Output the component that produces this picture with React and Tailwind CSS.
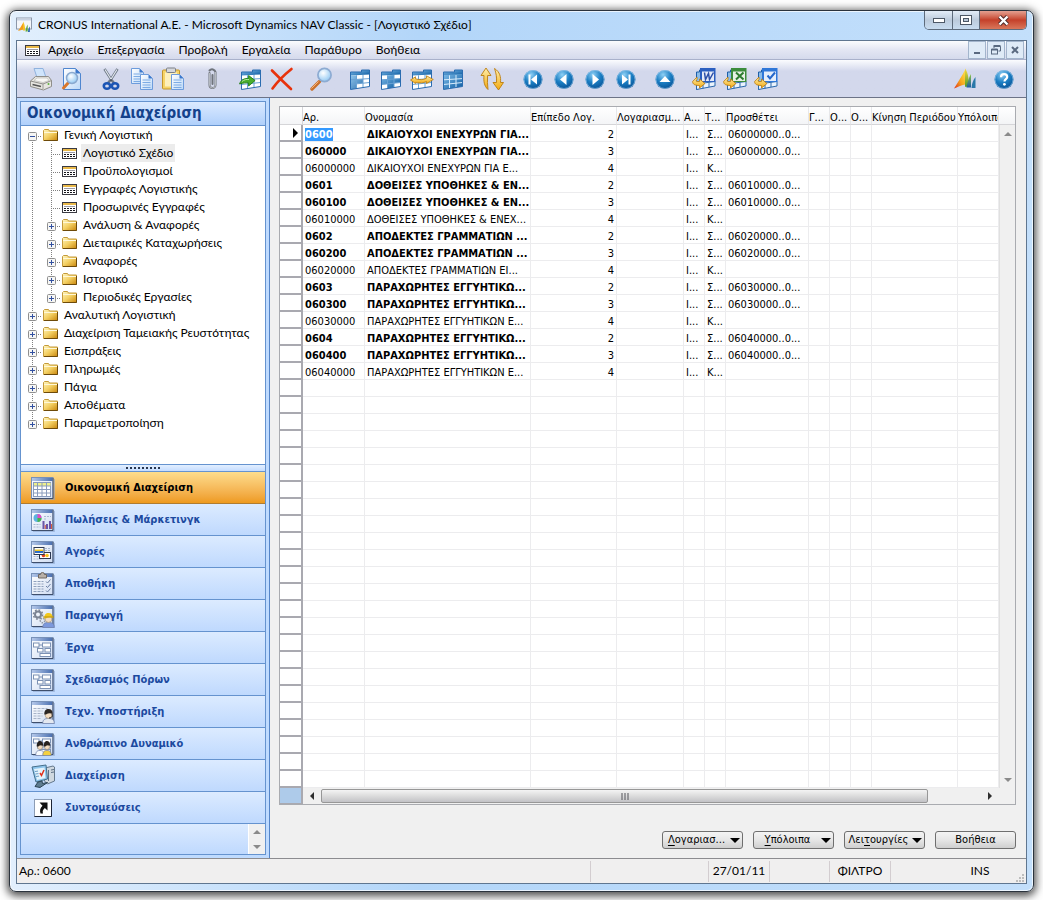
import React from 'react';

const UI = "font-['Lato','Open_Sans',sans-serif]";
const GRID = "font-['DejaVu_Sans_Condensed','DejaVu_Sans',sans-serif]";

/* ---------- shared gradients for the drawings ---------- */
function Defs() {
  return (
    <svg className="absolute h-0 w-0" aria-hidden="true">
      <defs>
        <linearGradient id="gFolder" x1="0" y1="0" x2="1" y2="1">
          <stop offset="0" stopColor="#fff6c0" />
          <stop offset=".5" stopColor="#f3cf62" />
          <stop offset="1" stopColor="#c9860c" />
        </linearGradient>
        <linearGradient id="gBlue" x1="0" y1="0" x2="1" y2="1">
          <stop offset="0" stopColor="#7dbbe8" />
          <stop offset="1" stopColor="#0b5aa0" />
        </linearGradient>
        <radialGradient id="gOrb" cx=".4" cy=".25" r=".8">
          <stop offset="0" stopColor="#8fd0f5" />
          <stop offset=".5" stopColor="#1c7fc4" />
          <stop offset="1" stopColor="#064e92" />
        </radialGradient>
        <radialGradient id="gLens" cx=".4" cy=".35" r=".7">
          <stop offset="0" stopColor="#ffffff" />
          <stop offset="1" stopColor="#8cc6f2" />
        </radialGradient>
        <linearGradient id="gGold" x1="0" y1="0" x2="0" y2="1">
          <stop offset="0" stopColor="#fff0b0" />
          <stop offset="1" stopColor="#f2a80c" />
        </linearGradient>
        <linearGradient id="gPage" x1="0" y1="0" x2="1" y2="1">
          <stop offset="0" stopColor="#ffffff" />
          <stop offset="1" stopColor="#bcd9f8" />
        </linearGradient>
        <linearGradient id="gWin" x1="0" y1="0" x2="1" y2="1">
          <stop offset="0" stopColor="#ffffff" />
          <stop offset="1" stopColor="#cfdcf2" />
        </linearGradient>
        <linearGradient id="gBar" x1="0" y1="0" x2="1" y2="0">
          <stop offset="0" stopColor="#b4c8ea" />
          <stop offset="1" stopColor="#4b70b0" />
        </linearGradient>
        <linearGradient id="gDynA" x1="0" y1="1" x2="1" y2="0">
          <stop offset="0" stopColor="#e0301e" />
          <stop offset=".5" stopColor="#f6a81c" />
          <stop offset="1" stopColor="#ffe24a" />
        </linearGradient>
        <linearGradient id="gDynB" x1="0" y1="0" x2="0" y2="1">
          <stop offset="0" stopColor="#ffd83c" />
          <stop offset="1" stopColor="#4c9c2c" />
        </linearGradient>
        <linearGradient id="gDynC" x1="0" y1="0" x2="0" y2="1">
          <stop offset="0" stopColor="#8cc63c" />
          <stop offset="1" stopColor="#1c5ca8" />
        </linearGradient>
      </defs>
    </svg>
  );
}

function Svg({ children, size = 24 }) {
  return (
    <svg width={size} height={size} viewBox={`0 0 ${size} ${size}`} fill="none" aria-hidden="true" className="shrink-0">
      {children}
    </svg>
  );
}

/* ---------- toolbar drawings ---------- */
const Printer = () => (
  <Svg>
    <path d="M5 1.5h9l3 9H8z" fill="#cfe4fb" stroke="#8fb2de" />
    <path d="M1.5 14l5-4.5h13l3 4v6l-8 3.5-13-3.5z" fill="#e6e5e0" stroke="#8f8e8a" />
    <path d="M1.5 14l12.500 3 8.500-3.500" stroke="#8f8e8a" />
    <path d="M14 17v5" stroke="#9d9c98" />
    <path d="M3.500 17.500l8.500 2" stroke="#555" strokeWidth="1.500" />
    <path d="M8 11h10l2 2.500-6 2-9-2z" fill="#f8f8f5" stroke="#b5b4b0" strokeWidth=".6" />
    <circle cx="19.500" cy="17" r="1" fill="#5fb43c" />
  </Svg>
);
const Preview = () => (
  <Svg>
    <path d="M3.500 1.500h12l5 5v16h-17z" fill="url(#gPage)" stroke="#4f86cf" />
    <path d="M15.500 1.500l5 5h-5z" fill="#3c78cc" />
    <path d="M8.500 15.500L3.500 21" stroke="#d9772b" strokeWidth="3" strokeLinecap="round" />
    <circle cx="12" cy="11" r="5.500" fill="url(#gLens)" stroke="#8aa9cf" strokeWidth="1.500" />
  </Svg>
);
const Cut = () => (
  <Svg>
    <path d="M5.500 2l7 11 2.500 3M18.500 2l-7 11L9 16" stroke="#6d7886" strokeWidth="2.600" />
    <path d="M6 2.500l6.500 10.500M18 2.500L11.500 13" stroke="#e4e9ef" strokeWidth="1.100" />
    <ellipse cx="8" cy="19" rx="3.200" ry="2.800" stroke="#1b55b4" strokeWidth="2.600" />
    <ellipse cx="16" cy="19" rx="3.200" ry="2.800" stroke="#1b55b4" strokeWidth="2.600" />
    <circle cx="12" cy="13" r="1" fill="#3f4a58" />
  </Svg>
);
function Sheet({ x, y }) {
  return (
    <g>
      <path d={`M${x} ${y}h8l4 4v11h-12z`} fill="url(#gPage)" stroke="#6d9cdc" />
      <path d={`M${x + 8} ${y}l4 4h-4z`} fill="#3c78cc" />
      <path d={`M${x + 2} ${y + 5.5}h8M${x + 2} ${y + 8}h8M${x + 2} ${y + 10.5}h8M${x + 2} ${y + 13}h8`} stroke="#7cabe4" />
    </g>
  );
}
const Copy = () => (
  <Svg>
    <Sheet x={1.5} y={1.5} />
    <Sheet x={10.5} y={7.5} />
  </Svg>
);
const Paste = () => (
  <Svg>
    <rect x="1.500" y="3" width="17" height="19" rx="1" fill="#f6d468" stroke="#c3962c" />
    <rect x="4" y="5.500" width="12" height="14" fill="#fdf0bc" />
    <rect x="5.500" y="1" width="9" height="4.500" rx="1" fill="#d6d8dc" stroke="#7d8086" />
    <Sheet x={10.5} y={7.5} />
  </Svg>
);
const Clip = () => (
  <Svg>
    <path d="M9.500 6v12a3 3 0 006 0V5a3.500 3.500 0 00-6-1.500M12.500 8v9" stroke="#6f747c" strokeWidth="2" strokeLinecap="round" />
    <path d="M9.500 6v12a3 3 0 006 0V5" stroke="#c6cad0" strokeWidth=".8" />
  </Svg>
);
const SHEET_OUTLINE = 'M2.500 5h11V3H21.500v16.500l-19 3z';
function Grid({ fills, light }) {
  return (
    <g>
      <path d={SHEET_OUTLINE} fill="#ffffff" />
      <path d="M2.500 5h11V3h8v4.500l-19 1z" fill="url(#gBlue)" />
      {fills}
      <path d="M2.500 12.800l19-1.200M2.500 17.500l19-2M8.500 8.300v13.200M15 8v12.500" stroke={light ? '#d8ecfc' : '#6aa2d4'} />
      <path d={SHEET_OUTLINE} stroke="#2a6cb0" />
    </g>
  );
}
const TableCol = () => <Svg><Grid fills={<path d="M2.500 8.500h6v13l-6 1zM8.500 12.600l6.500-.5v4l-6.500.7z" fill="url(#gBlue)" opacity=".85" />} /></Svg>;
const TableRow = () => <Svg><Grid fills={<path d="M2.500 12.800l19-1.200v4l-19 2zM8.500 8.300L15 8v12.500l-6.500 1z" fill="url(#gBlue)" />} /></Svg>;
const TableFull = () => <Svg><Grid light fills={<path d="M2.500 8l19-1v12.500l-19 3z" fill="url(#gBlue)" />} /></Svg>;
const TableArrow = () => (
  <Svg>
    <Grid />
    <path d="M.5 13l5-3.200v2c5 1.400 8 1 11-.6V8.800l6.800 3.700-6.800 4v-2c-3 1.500-7 1.800-11 1v1z" fill="url(#gGold)" stroke="#b97a0c" strokeWidth=".8" />
  </Svg>
);
const TableInsert = () => (
  <Svg>
    <Grid />
    <path d="M.6 17c1-4 5-6 9-5.500V8.500l6.500 5-6.500 5.500v-3c-3-.5-5 0-9 1z" fill="#49ae2c" stroke="#1d7a12" strokeWidth=".9" />
    <path d="M3 14.500c2-1.800 4.500-2.300 7-2" stroke="#b8ec9c" />
  </Svg>
);
const Cross = () => (
  <Svg>
    <path d="M2 3.500c5 5 11 11 19 18.500M21.500 2C14 8 8 14 2.500 21.500" stroke="#e8320c" strokeWidth="2.600" strokeLinecap="round" />
  </Svg>
);
const Find = () => (
  <Svg>
    <path d="M10.500 14.500L3 22" stroke="#c9702c" strokeWidth="3.400" strokeLinecap="round" />
    <path d="M9.500 14.500L2.500 21.500" stroke="#f6b47c" strokeWidth="1" />
    <circle cx="15.500" cy="8" r="6.600" fill="url(#gLens)" stroke="#8dabd2" strokeWidth="1.700" />
  </Svg>
);
const Refresh = () => (
  <Svg>
    <path d="M6 1L1 8.500h3C3.500 14 4 19 8 22.500c-.6-5-.7-9-.4-14H11z" fill="url(#gGold)" stroke="#bb7d0c" strokeWidth=".9" />
    <path d="M18.500 23l5-7.500h-3C21 10 20 5 14.500 1.500c1.800 5 2.300 9 2 14H13z" fill="url(#gGold)" stroke="#bb7d0c" strokeWidth=".9" />
  </Svg>
);
function Orb({ children }) {
  return (
    <Svg>
      <circle cx="12" cy="12.500" r="9.500" fill="url(#gOrb)" />
      <circle cx="12" cy="12.500" r="9" stroke="#9cc8ea" strokeWidth=".8" opacity=".8" />
      {children}
    </Svg>
  );
}
const First = () => <Orb><path d="M7.500 7.500h2v10h-2zM16 7.500v10l-6-5z" fill="#fff" /></Orb>;
const Prev = () => <Orb><path d="M14.500 7v11L8 12.500z" fill="#fff" /></Orb>;
const Next = () => <Orb><path d="M9.500 7v11l6.500-5.500z" fill="#fff" /></Orb>;
const Last = () => <Orb><path d="M14.500 7.500h2v10h-2zM8 7.500v10l6-5z" fill="#fff" /></Orb>;
const Up = () => <Orb><path d="M6.500 15h11L12 9z" fill="#fff" /></Orb>;
const Help = () => (
  <Orb>
    <path d="M9 10.200c0-2 1.300-3 3.100-3 1.900 0 3.100 1.100 3.100 2.700 0 2.100-2.700 2.300-2.700 4.500" stroke="#fff" strokeWidth="2.200" />
    <circle cx="12.400" cy="17.300" r="1.400" fill="#fff" />
  </Orb>
);
function Export({ color, children }) {
  return (
    <Svg>
      <path d="M4.500 5h3V3h4v16.500l-7 3z" fill="#8cbce8" stroke="#1d5fa8" />
      <path d="M4.500 17L23 14.500v4.500L4.500 22.500z" fill="#eaf3fc" stroke="#2a68ac" />
      <path d="M11 16v5.500M17 15.500V20" stroke="#2a68ac" />
      <rect x="8.500" y="1.500" width="14.500" height="13" fill={color} stroke={color} />
      <rect x="10" y="4.500" width="12" height="9.500" fill="#fff" opacity=".88" />
      {children}
      <path d="M.6 14.500L5 10v2.500c-1 1-1 1.800 0 2h2.500V12l5.500 4.500-5.500 4.500v-2.500C3.500 18.500.6 17.500.6 14.500z" fill="url(#gGold)" stroke="#b9780a" strokeWidth=".8" />
    </Svg>
  );
}
const Word = () => <Export color="#2b5fc0"><path d="M12.500 5.500l1 7 3-6 1 6 4-7" stroke="#2b4fa8" strokeWidth="1.500" /></Export>;
const Excel = () => <Export color="#3c8c3c"><path d="M13 5.500l7.500 7M20.500 5.500l-7.500 7" stroke="#2c7c30" strokeWidth="2" /></Export>;
const Check = () => <Export color="#2f77d8"><path d="M13.500 8.500l2.500 3 5-6" stroke="#2467cc" strokeWidth="2" /></Export>;
const Dynamics = () => (
  <Svg>
    <path d="M1 21.500C5 15 9 9 12 3v14.500C8 18.500 4.500 20 1 21.500z" fill="url(#gDynA)" />
    <path d="M12 1.500c2.500 3 3.800 8 4 18.200h-4z" fill="url(#gDynB)" />
    <path d="M13.500 20.500c.8-5 2.200-9.500 4.500-13.500v13.500z" fill="url(#gDynC)" />
    <path d="M18.500 21c.3-4.500 1.700-8 4-11v11z" fill="#2a78a8" />
  </Svg>
);

/* ---------- small drawings ---------- */
const AppLogo = () => (
  <Svg size={16}>
    <rect x=".5" y="1" width="15" height="11" fill="#f4f6fa" stroke="#8d98aa" />
    <path d="M1 1.500h14v2H1z" fill="#c8d2e2" />
    <path d="M2 14c2-3 3.500-5 5-8v6.500z" fill="#f39c1c" />
    <path d="M7 4.500c1.500 2 2 5 2.200 9H7z" fill="#f6c324" />
    <path d="M9.500 14.500c.3-3 1-5 2.200-7v7z" fill="#5fa83c" />
    <path d="M12 15c.2-3 .8-4 1.800-5.500V15z" fill="#1f5fae" />
  </Svg>
);
const FormIcon = () => (
  <svg width="15" height="11" viewBox="0 0 15 11" aria-hidden="true" className="shrink-0">
    <rect x=".5" y=".5" width="14" height="10" fill="#fff" stroke="#3a3a42" />
    <path d="M1 1h13v2H1z" fill="#e9b94a" />
    <path d="M2 4.500h11" stroke="#9a9aa4" />
    <path d="M2 6.500h2M5 6.500h2M8 6.500h2M11 6.500h2M2 8.500h2M5 8.500h2M8 8.500h2M11 8.500h2" stroke="#16161c" />
  </svg>
);
const Folder = () => (
  <svg width="15" height="12" viewBox="0 0 15 12" aria-hidden="true" className="shrink-0">
    <path d="M.5 11.500v-10l1-1h4l1 1.500h8v9.500z" fill="url(#gFolder)" stroke="#c49a3a" />
    <path d="M1 3.500h13" stroke="#fff8d8" />
    <path d="M14.500 3v8.500H1" stroke="#6d4a0a" fill="none" />
  </svg>
);

function WinFrame({ children }) {
  return (
    <Svg>
      <path d="M2 23.500h21.500V3" stroke="#8ba3cc" opacity=".6" />
      <rect x=".5" y="1.500" width="21.500" height="21" fill="url(#gWin)" stroke="#7891b8" />
      <path d="M1 2h20.500v3H1z" fill="url(#gBar)" />
      <path d="M22 2v20.500H1" stroke="#3f4f6c" />
      {children}
    </Svg>
  );
}
const Person = ({ hair, body, x = 17.5, r = 3.4 }) => (
  <g>
    <path d={`M${x - r * 1.7} 23.500c0-4 ${r * 0.6}-5 ${r * 1.7}-5s${r * 1.7} 1 ${r * 1.7} 5z`} fill={body} stroke="#6b7da8" strokeWidth=".7" />
    <circle cx={x} cy="15" r={r} fill="#f4dcc0" stroke="#8a7a60" strokeWidth=".5" />
    <path d={`M${x - r - 0.8} 14.500c0-4 1.500-5.500 ${r + 0.8}-5.500s${r + 0.8} 1.500 ${r + 0.8} 5c-2-1-${r * 1.3}-1-${r * 2} .5z`} fill={hair} />
  </g>
);
const Flow = () => (
  <g stroke="#7d92b4" fill="#fff">
    <path d="M7 9h4M7 9v6h4M16 12v2" fill="none" />
    <rect x="2.500" y="7" width="5.500" height="4" />
    <rect x="11.500" y="7" width="8" height="4" />
    <rect x="6.500" y="12.500" width="5.500" height="3.500" />
    <rect x="14" y="12.500" width="5.500" height="3.500" />
    <rect x="9" y="17.500" width="10.500" height="3" />
  </g>
);
const NavFinance = () => (
  <WinFrame>
    <rect x="2.500" y="6.500" width="17" height="14" fill="#fff" stroke="#8a9cbc" />
    <path d="M3 7h16.500v3H3z" fill="#eef08c" />
    <path d="M2.500 10h17M2.500 13.500h17M2.500 17h17M6.500 6.500v14M11 6.500v14M15.500 6.500v14" stroke="#8a9cbc" />
  </WinFrame>
);
const NavSales = () => (
  <WinFrame>
    <circle cx="6.500" cy="10" r="4" fill="#5bb4e0" />
    <path d="M6.500 10V6a4 4 0 014 4z" fill="#e04cc0" />
    <path d="M6.500 10h4a4 4 0 01-4 4z" fill="#48b44c" />
    <path d="M13 8.500h7M13 11h3M2.500 16.500h7M2.500 19h7" stroke="#a8b8d0" strokeDasharray="2 1" />
    <path d="M12.500 21v-8M16 21v-5M19 21v-8" stroke="#6a56a8" strokeWidth="2" />
    <path d="M14.300 21v-4M20.500 21v-5" stroke="#d85a3c" />
  </WinFrame>
);
const NavPurchases = () => (
  <WinFrame>
    <path d="M14 8.500h6M14 10.500h6M2.500 16.500h7M2.500 19h10" stroke="#a8b8d0" strokeDasharray="2 1" />
    <rect x="8.500" y="12.500" width="11" height="6" fill="#fff" stroke="#2c3850" />
    <circle cx="12.500" cy="15.500" r="1.800" fill="#e0401c" />
    <circle cx="16" cy="15.500" r="1.800" fill="#f4c420" />
    <rect x="3" y="7.500" width="10" height="7" fill="#fff" stroke="#2c3850" />
    <path d="M4 9.500h8v1.500H4z" fill="#f4c81c" />
    <path d="M4 11h8v2H4z" fill="#2c6cc8" />
  </WinFrame>
);
const NavWarehouse = () => (
  <WinFrame>
    <path d="M7.500 6V2.500h2a2 2 0 014 0h2V6z" fill="#b8b0a8" stroke="#706860" />
    <path d="M2.500 9.500h10M2.500 12h10M2.500 14.500h10M2.500 17h10M2.500 19.500h10" stroke="#8fa0bc" strokeDasharray="3 1" />
    <path d="M15 9.500l1.500 1.500 3-3.500M15 14l1.500 1.500 3-3.500M15 18.500l1.500 1.500 3-3.500" stroke="#6c80a4" />
  </WinFrame>
);
const NavProduction = () => (
  <WinFrame>
    <circle cx="7" cy="10.500" r="3" stroke="#7c8494" strokeWidth="2" />
    <circle cx="7" cy="10.500" r="4.600" stroke="#7c8494" strokeWidth="1.500" strokeDasharray="1.800 1.800" />
    <circle cx="11.500" cy="16.500" r="2.200" stroke="#9098a4" strokeWidth="1.500" strokeDasharray="1.500 1" />
    <Person hair="#f2c81c" body="#7c98dc" />
    <path d="M12 13h11" stroke="#b8900c" />
  </WinFrame>
);
const NavJobs = () => <WinFrame><Flow /></WinFrame>;
const NavService = () => (
  <WinFrame>
    <path d="M2.500 8.500h14M2.500 11h9M2.500 13.500h9M2.500 16h9M2.500 18.500h8" stroke="#a8b4c8" strokeDasharray="3 1" />
    <Person hair="#2c2622" body="#e4e8f0" />
    <path d="M21 14c1 2 0 4-3 4" stroke="#2c2622" />
  </WinFrame>
);
const NavHr = () => (
  <WinFrame>
    <Flow />
    <Person hair="#28221e" body="#f8fafc" x={9} r={2.5} />
    <Person hair="#28221e" body="#f4d040" x={16} r={2.5} />
  </WinFrame>
);
const NavAdmin = () => (
  <Svg>
    <path d="M14 4l8-2 1.500 1v14l-7 3-3-3z" fill="#cfd8e0" stroke="#64788c" />
    <path d="M17.500 6v11M20 6l3-.5M20 8.500l3-.5" stroke="#5c7086" />
    <path d="M1 3l14-2 1.500 14L5 18z" fill="#8cc4ec" stroke="#46708c" />
    <path d="M3 5l10.500-1.500L14.500 14 6 16z" fill="#e4f3fc" />
    <path d="M9 9l1.500 2.500L13 6" stroke="#e0301c" strokeWidth="1.500" />
    <path d="M4 7.500l3-.4M4.500 10l3-.4M5 12.500l3-.4" stroke="#6c9cc4" />
    <path d="M7 18l4-1 .5 2.500 5-1L9 23.500l-5-1z" fill="#5e7c90" stroke="#2c4454" />
  </Svg>
);
const NavShortcut = () => (
  <Svg>
    <rect x="3.500" y="3.500" width="17" height="17" fill="#fff" stroke="#8c9cb4" />
    <path d="M20.500 3.500v17h-17" stroke="#1c2434" />
    <path d="M8.500 6.500h8v8l-2.600-2.600c-2 1.500-2.600 3-1.900 5.600h-2.500c-1-3-.3-5.500 2-7.700z" fill="#111" />
  </Svg>
);

/* ---------- data ---------- */
const MENU = ['Αρχείο', 'Επεξεργασία', 'Προβολή', 'Εργαλεία', 'Παράθυρο', 'Βοήθεια'];

const TOOLS = [
  [['Εκτύπωση', Printer], ['Προεπισκόπηση', Preview]],
  [['Αποκοπή', Cut], ['Αντιγραφή', Copy], ['Επικόλληση', Paste]],
  [['Σύνδεσμος', Clip]],
  [['Εισαγωγή', TableInsert], ['Διαγραφή', Cross]],
  [['Εύρεση', Find]],
  [['Φίλτρο πεδίου', TableCol], ['Φίλτρο πίνακα', TableRow], ['Φίλτρο ροής', TableArrow], ['Εμφάνιση όλων', TableFull]],
  [['Ανανέωση', Refresh]],
  [['Πρώτο', First], ['Προηγούμενο', Prev], ['Επόμενο', Next], ['Τελευταίο', Last]],
  [['Λίστα', Up]],
  [['Word', Word], ['Excel', Excel], ['Εργασία', Check]],
];

const TREE = [
  { label: 'Γενική Λογιστική', open: true },
  { label: 'Λογιστικό Σχέδιο', depth: 1, leaf: true, selected: true },
  { label: 'Προϋπολογισμοί', depth: 1, leaf: true },
  { label: 'Εγγραφές Λογιστικής', depth: 1, leaf: true },
  { label: 'Προσωρινές Εγγραφές', depth: 1, leaf: true },
  { label: 'Ανάλυση & Αναφορές', depth: 1 },
  { label: 'Διεταιρικές Καταχωρήσεις', depth: 1 },
  { label: 'Αναφορές', depth: 1 },
  { label: 'Ιστορικό', depth: 1 },
  { label: 'Περιοδικές Εργασίες', depth: 1, last: true },
  { label: 'Αναλυτική Λογιστική' },
  { label: 'Διαχείριση Ταμειακής Ρευστότητας' },
  { label: 'Εισπράξεις' },
  { label: 'Πληρωμές' },
  { label: 'Πάγια' },
  { label: 'Αποθέματα' },
  { label: 'Παραμετροποίηση', last: true },
];

const NAV = [
  ['Οικονομική Διαχείριση', NavFinance],
  ['Πωλήσεις & Μάρκετινγκ', NavSales],
  ['Αγορές', NavPurchases],
  ['Αποθήκη', NavWarehouse],
  ['Παραγωγή', NavProduction],
  ['Έργα', NavJobs],
  ['Σχεδιασμός Πόρων', NavJobs],
  ['Τεχν. Υποστήριξη', NavService],
  ['Ανθρώπινο Δυναμικό', NavHr],
  ['Διαχείριση', NavAdmin],
  ['Συντομεύσεις', NavShortcut],
];

const HEADERS = ['Αρ.', 'Ονομασία', 'Επίπεδο Λογ.', 'Λογαριασμ...', 'Α...', 'Τ...', 'Προσθέτει', 'Γ...', 'Ο...', 'Ο...', 'Κίνηση Περιόδου', 'Υπόλοιπο'];

const ROWS = [
  ['0600', 'ΔΙΚΑΙΟΥΧΟΙ ΕΝΕΧΥΡΩΝ ΓΙΑ...', 2, '06000000..0...'],
  ['060000', 'ΔΙΚΑΙΟΥΧΟΙ ΕΝΕΧΥΡΩΝ ΓΙΑ...', 3, '06000000..0...'],
  ['06000000', 'ΔΙΚΑΙΟΥΧΟΙ ΕΝΕΧΥΡΩΝ ΓΙΑ Ε...', 4, ''],
  ['0601', 'ΔΟΘΕΙΣΕΣ ΥΠΟΘΗΚΕΣ & ΕΝ...', 2, '06010000..0...'],
  ['060100', 'ΔΟΘΕΙΣΕΣ ΥΠΟΘΗΚΕΣ & ΕΝ...', 3, '06010000..0...'],
  ['06010000', 'ΔΟΘΕΙΣΕΣ ΥΠΟΘΗΚΕΣ & ΕΝΕΧ...', 4, ''],
  ['0602', 'ΑΠΟΔΕΚΤΕΣ ΓΡΑΜΜΑΤΙΩΝ ...', 2, '06020000..0...'],
  ['060200', 'ΑΠΟΔΕΚΤΕΣ ΓΡΑΜΜΑΤΙΩΝ ...', 3, '06020000..0...'],
  ['06020000', 'ΑΠΟΔΕΚΤΕΣ ΓΡΑΜΜΑΤΙΩΝ ΕΙ...', 4, ''],
  ['0603', 'ΠΑΡΑΧΩΡΗΤΕΣ ΕΓΓΥΗΤΙΚΩ...', 2, '06030000..0...'],
  ['060300', 'ΠΑΡΑΧΩΡΗΤΕΣ ΕΓΓΥΗΤΙΚΩ...', 3, '06030000..0...'],
  ['06030000', 'ΠΑΡΑΧΩΡΗΤΕΣ ΕΓΓΥΗΤΙΚΩΝ Ε...', 4, ''],
  ['0604', 'ΠΑΡΑΧΩΡΗΤΕΣ ΕΓΓΥΗΤΙΚΩ...', 2, '06040000..0...'],
  ['060400', 'ΠΑΡΑΧΩΡΗΤΕΣ ΕΓΓΥΗΤΙΚΩ...', 3, '06040000..0...'],
  ['06040000', 'ΠΑΡΑΧΩΡΗΤΕΣ ΕΓΓΥΗΤΙΚΩΝ Ε...', 4, ''],
];
const EMPTY_ROWS = 24;

/* ---------- window chrome ---------- */
function TitleBar() {
  const b = 'flex h-[18px] items-center justify-center';
  const plain = 'bg-linear-to-b from-[#e3edf8] via-[#bccbdc] to-[#c8dcf0]';
  return (
    <div className="flex h-[29px] items-start">
      <div className="flex min-w-0 flex-1 items-center gap-[6px] pt-[6px]">
        <AppLogo />
        <h1 className={`${UI} truncate text-[12px] leading-4 text-black`}>
          CRONUS International A.E. - Microsoft Dynamics NAV Classic - [Λογιστικό Σχέδιο]
        </h1>
      </div>
      <div className="flex shrink-0 overflow-hidden rounded-b-[5px] border border-t-0 border-[#5d6b7c]">
        <button aria-label="Ελαχιστοποίηση" className={`${b} ${plain} w-[28px] border-r border-[#5d6b7c]`}>
          <svg width="12" height="5" aria-hidden="true"><rect x=".5" y=".5" width="11" height="4" fill="#fff" stroke="#4d5866" /></svg>
        </button>
        <button aria-label="Μεγιστοποίηση" className={`${b} ${plain} w-[27px] border-r border-[#5d6b7c]`}>
          <svg width="12" height="10" aria-hidden="true"><rect x=".5" y=".5" width="11" height="9" fill="#fff" stroke="#4d5866" /><rect x="3.500" y="3.500" width="5" height="3" fill="#b9c7d6" stroke="#4d5866" /></svg>
        </button>
        <button aria-label="Κλείσιμο" className={`${b} w-[46px] bg-linear-to-b from-[#e3a091] via-[#c4402a] to-[#d9765a]`}>
          <svg width="13" height="11" viewBox="0 0 13 11" aria-hidden="true">
            <path d="M2.500 1.500l8 8M10.500 1.500l-8 8" stroke="#4a2a2a" strokeWidth="4.200" />
            <path d="M2.500 1.500l8 8M10.500 1.500l-8 8" stroke="#fff" strokeWidth="2.400" />
          </svg>
        </button>
      </div>
    </div>
  );
}

function MenuBar() {
  const b = 'flex h-[18px] w-[18px] items-center justify-center border border-[#a3b5cc] bg-[#dfebf7]';
  return (
    <div className="flex h-[19px] items-center border-b border-[#a9b1cb] bg-linear-to-b from-[#fbfcfe] via-[#e3e6f3] to-[#d5daec] pr-[2px] pl-2">
      <FormIcon />
      <nav className={`${UI} ml-2 flex flex-1 gap-[14px] text-[12px] leading-4 text-black`}>
        {MENU.map((m) => <button key={m} className="whitespace-nowrap">{m}</button>)}
      </nav>
      <div className="flex gap-[1px]">
        <button aria-label="Ελαχιστοποίηση εγγράφου" className={b}>
          <svg width="10" height="10" aria-hidden="true"><path d="M2 8h6" stroke="#5a6a80" strokeWidth="2" /></svg>
        </button>
        <button aria-label="Επαναφορά εγγράφου" className={b}>
          <svg width="10" height="10" fill="none" aria-hidden="true"><path d="M3 3V1.500h6.500V6H7.500" stroke="#5a6a80" /><path d="M2.500 1h7" stroke="#5a6a80" strokeWidth="2" /><rect x=".5" y="4.500" width="6" height="4.500" stroke="#5a6a80" /><path d="M.5 4.500h6" stroke="#5a6a80" strokeWidth="2" /></svg>
        </button>
        <button aria-label="Κλείσιμο εγγράφου" className={b}>
          <svg width="10" height="10" aria-hidden="true"><path d="M2 2l6 6M8 2l-6 6" stroke="#5a6a80" strokeWidth="2" /></svg>
        </button>
      </div>
    </div>
  );
}

function Tool({ label, Icon }) {
  return (
    <button aria-label={label} className="flex h-7 w-[31px] items-center justify-center"><Icon /></button>
  );
}
function Toolbar() {
  return (
    <div className="flex h-[38px] items-center border-b border-[#6c7387] bg-linear-to-b from-[#fbfcfe] from-0% via-[#d3d8ec] via-30% to-[#d3d8ec] pt-[1px] pr-[7px] pl-2">
      <div className="flex flex-1 gap-2">
        {TOOLS.map((group, i) => (
          <div key={i} className={i === 7 ? 'ml-[2px] flex' : 'flex'}>
            {group.map(([label, Icon]) => <Tool key={label} label={label} Icon={Icon} />)}
          </div>
        ))}
      </div>
      <div className="flex gap-2">
        <Tool label="Microsoft Dynamics" Icon={Dynamics} />
        <Tool label="Βοήθεια" Icon={Help} />
      </div>
    </div>
  );
}

/* ---------- sidebar ---------- */
function Guide({ line = 'full', toggle, branch }) {
  const end = line === 'half' ? 10 : 18;
  const start = line === 'bottom' ? 10 : 0;
  return (
    <svg width="19" height="18" viewBox="0 0 19 18" fill="none" aria-hidden="true" className="shrink-0">
      <path d={`M9.500 ${start}V${end}`} stroke="#808080" strokeDasharray="1 1" />
      {branch && <path d="M9 10.500h10" stroke="#808080" strokeDasharray="1 1" />}
      {toggle && (
        <g>
          <rect x="5.500" y="6.500" width="8" height="8" rx="1" fill="#f6f6f4" stroke="#8f8f8f" />
          <path d={toggle === 'open' ? 'M7 10.500h5' : 'M7 10.500h5M9.500 8v5'} stroke="#3250a0" />
        </g>
      )}
    </svg>
  );
}

function Tree() {
  return (
    <ul className={`${UI} flex-1 overflow-hidden bg-white pb-8 pl-[2px] text-[12px] text-black`}>
      {TREE.map((n, i) => (
        <li key={n.label} className="flex h-[18px] items-center">
          {n.depth
            ? <Guide />
            : <Guide toggle={n.open ? 'open' : 'closed'} branch line={i === 0 ? 'bottom' : n.last ? 'half' : 'full'} />}
          {n.depth && <Guide toggle={n.leaf ? undefined : 'closed'} branch line={n.last ? 'half' : 'full'} />}
          <span className="pl-[1px]">{n.leaf ? <FormIcon /> : <Folder />}</span>
          <a href="#" className={n.selected ? 'ml-1 bg-[#ececec] px-[2px] leading-[18px] whitespace-nowrap' : 'ml-1 px-[2px] leading-[18px] whitespace-nowrap'}>
            {n.label}
          </a>
        </li>
      ))}
    </ul>
  );
}

function Sidebar() {
  return (
    <aside className="flex w-[253px] shrink-0 border-r border-[#5585c8] bg-[#bfdbff] p-[3px]">
      <div className="flex flex-1 flex-col border border-[#6593cf]">
        <h2 className={`${GRID} h-[24px] border-b border-[#6593cf] bg-linear-to-b from-[#dceaff] to-[#b0d0fb] pl-[6px] text-[15px] leading-[23px] font-bold text-[#15428b]`}>
          Οικονομική Διαχείριση
        </h2>
        <Tree />
        <div className="flex h-[8px] items-center justify-center border-y border-[#6593cf] bg-linear-to-b from-[#e3efff] to-[#c4dcff]">
          <svg width="36" height="3" aria-hidden="true"><path d="M1 1h35" stroke="#26354f" strokeWidth="2" strokeDasharray="2 2" /></svg>
        </div>
        <nav className={`${GRID} text-[11px] font-bold`}>
          {NAV.map(([label, Icon], i) => (
            <button
              key={label}
              className={
                i === 0
                  ? 'flex h-8 w-full items-center border-b border-[#b07c30] bg-linear-to-b from-[#fddd8c] to-[#ee9a1c] pl-[10px] text-black'
                  : 'flex h-8 w-full items-center border-b border-[#6593cf] bg-linear-to-b from-[#dcebff] to-[#bfd9fe] pl-[10px] text-[#1c4aa0]'
              }
            >
              <Icon />
              <span className="ml-[10px] pt-[2px]">{label}</span>
            </button>
          ))}
        </nav>
        <div className="flex h-[30px] justify-end bg-linear-to-b from-[#dcebff] to-[#bfd9fe]">
          <div className="flex w-[17px] flex-col border-l border-white bg-[#f0f0f0]">
            <button aria-label="Πάνω" className="flex flex-1 items-center justify-center"><Arrow dir="up" /></button>
            <button aria-label="Κάτω" className="flex flex-1 items-center justify-center"><Arrow dir="down" /></button>
          </div>
        </div>
      </div>
    </aside>
  );
}

function Arrow({ dir, dark }) {
  const d = { up: 'M0 6l4-4 4 4z', down: 'M0 2h8L4 6z', left: 'M6 0v8L2 4z', right: 'M2 0l4 4-4 4z' }[dir];
  return <svg width="8" height="8" viewBox="0 0 8 8" aria-hidden="true"><path d={d} fill={dark ? '#2e2e2e' : '#8a8a8a'} /></svg>;
}

/* ---------- grid ---------- */
function Selector({ active }) {
  return (
    <td className="h-[17px] border-r-2 border-b-2 border-[#a9a9b0] bg-white p-0">
      {active && (
        <svg width="6" height="10" viewBox="0 0 6 10" className="ml-[13px]" aria-hidden="true"><path d="M0 0l5 5-5 5z" fill="#000" /></svg>
      )}
    </td>
  );
}

function AccountTable() {
  const td = 'h-[17px] overflow-hidden border-r border-b border-[#ececee] pt-1 pb-0 pl-[2px] leading-3 whitespace-nowrap';
  return (
    <table className={`${GRID} w-full table-fixed border-separate border-spacing-0 text-[11px] text-black`}>
      <colgroup>
        <col className="w-[23px]" />
        <col className="w-[62px]" />
        <col className="w-[166px]" />
        <col className="w-[86px]" />
        <col className="w-[67px]" />
        <col className="w-[21px]" />
        <col className="w-[21px]" />
        <col className="w-[83px]" />
        <col className="w-[21px]" />
        <col className="w-[21px]" />
        <col className="w-[21px]" />
        <col className="w-[86px]" />
        <col />
      </colgroup>
      <thead>
        <tr className="bg-linear-to-b from-white to-[#f3f4f6]">
          <td className="h-[18px] border-r border-b border-[#d5d5d8] p-0" />
          {HEADERS.map((h, i) => (
            <th key={i} className="h-[18px] overflow-hidden border-r border-b border-r-[#e6e7ea] border-b-[#d5d5d8] p-0 pt-1 text-left leading-[13px] font-normal whitespace-nowrap">{h}</th>
          ))}
        </tr>
      </thead>
      <tbody>
        {ROWS.map(([no, name, level, sum], i) => {
          const bold = level < 4 ? `${td} font-bold` : td;
          return (
            <tr key={no}>
              <Selector active={i === 0} />
              <td className={bold}>{i === 0 ? <span className="bg-[#3399ff] text-white">{no}</span> : no}</td>
              <td className={bold}>{name}</td>
              <td className={`${td} pr-[2px] text-right`}>{level}</td>
              <td className={td} />
              <td className={td}>Ι...</td>
              <td className={td}>{level < 4 ? 'Σ...' : 'Κ...'}</td>
              <td className={td}>{sum}</td>
              <td className={td} />
              <td className={td} />
              <td className={td} />
              <td className={td} />
              <td className={td} />
            </tr>
          );
        })}
        {Array.from({ length: EMPTY_ROWS }, (_, r) => (
          <tr key={r}>
            <Selector />
            {HEADERS.map((_, c) => <td key={c} className={td} />)}
          </tr>
        ))}
      </tbody>
    </table>
  );
}

function GridPanel() {
  return (
    <div className="flex flex-col border border-[#a9abb0] bg-white">
      <div className="flex">
        <div className="min-w-0 flex-1"><AccountTable /></div>
        <div className="flex w-4 shrink-0 flex-col">
          <div className="h-[18px] border-b border-[#d5d5d8] bg-linear-to-b from-white to-[#f3f4f6]" />
          <div className="flex flex-1 flex-col justify-between border-l border-[#e0e0e0] bg-[#f0f0f0]">
            <button aria-label="Κύλιση επάνω" className="flex h-[17px] items-center justify-center"><Arrow dir="up" /></button>
            <button aria-label="Κύλιση κάτω" className="flex h-[17px] items-center justify-center"><Arrow dir="down" /></button>
          </div>
        </div>
      </div>
      <div className="flex h-4 bg-[#f0f0f0]">
        <div className="w-[23px] border-r-2 border-b border-[#a9a9b0] bg-[#aecbea]" />
        <button aria-label="Κύλιση αριστερά" className="flex w-[18px] items-center justify-center"><Arrow dir="left" dark /></button>
        <div className="flex flex-1 py-[1px]">
          <div className="flex w-[92%] items-center justify-center rounded-[2px] border border-[#979797] bg-linear-to-b from-[#f4f4f4] via-[#dcdcdc] to-[#c2c2c6]">
            <svg width="8" height="7" aria-hidden="true"><path d="M1 0v7M4 0v7M7 0v7" stroke="#55555a" /></svg>
          </div>
        </div>
        <button aria-label="Κύλιση δεξιά" className="flex w-[18px] items-center justify-center"><Arrow dir="right" dark /></button>
        <div className="w-4" />
      </div>
    </div>
  );
}

function Action({ before = '', hot, after = '', menu }) {
  return (
    <button
      aria-haspopup={menu ? 'menu' : undefined}
      className={`${GRID} flex h-[18px] w-[81px] items-center rounded-[3px] border border-[#6f6f6f] bg-linear-to-b from-[#f4f4f4] via-[#e6e6e6] to-[#cfcfcf] text-[11px] leading-4 whitespace-nowrap text-black`}
    >
      <span className="flex-1 text-center">{before}{hot && <span className="underline underline-offset-2">{hot}</span>}{after}</span>
      {menu && <svg width="10" height="5" className="mr-[2px] shrink-0" aria-hidden="true"><path d="M0 0h10L5 5z" fill="#000" /></svg>}
    </button>
  );
}

function StatusBar() {
  const c = 'flex h-[21px] items-center justify-center border-l border-[#d3cdd0]';
  return (
    <footer className={`${UI} flex h-[25px] items-center border-t border-[#8c8c90] bg-[#f0efef] text-[12px] text-black`}>
      <div className="flex-1 pl-[2px]">Αρ.: 0600</div>
      <div className={`${c} w-[118px]`} />
      <div className={`${c} w-[61px]`}>27/01/11</div>
      <div className={`${c} w-[60px]`} />
      <div className={`${c} w-[61px]`}>ΦΙΛΤΡΟ</div>
      <div className={`${c} w-[55px]`} />
      <div className="w-[70px] text-center">INS</div>
      <svg width="10" height="10" className="mr-[1px] self-end" aria-hidden="true">
        <path d="M7 1h2v2H7zM4 4h2v2H4zM7 4h2v2H7zM1 7h2v2H1zM4 7h2v2H4zM7 7h2v2H7z" fill="#bdbdbd" />
      </svg>
    </footer>
  );
}

export default function App() {
  return (
    <div className="flex min-h-screen flex-col bg-white px-[9px] pt-[10px] pb-[9px]">
      <Defs />
      <main className="flex flex-1 flex-col rounded-[7px] border border-[#2b333d] bg-linear-to-r from-[#e2effd] via-[#b3d6f9] via-40% to-[#c3dffb] px-[6px] pb-[7px] shadow-[0_2px_9px_2px_rgba(0,0,0,0.7)] ring-1 ring-white/70 ring-inset">
        <TitleBar />
        <div className="flex flex-1 flex-col border border-[#5f7690] bg-[#f0f0f0]">
          <MenuBar />
          <Toolbar />
          <div className="flex flex-1">
            <Sidebar />
            <section className="flex min-w-0 flex-1 flex-col justify-between pt-2 pr-[10px] pb-[9px] pl-[9px]">
              <GridPanel />
              <div className="flex justify-end gap-[10px]">
                <Action hot="Λ" after="ογαριασ..." menu />
                <Action hot="Υ" after="πόλοιπα" menu />
                <Action before="Λει" hot="τ" after="ουργίες" menu />
                <Action before="Βοήθεια" />
              </div>
            </section>
          </div>
          <StatusBar />
        </div>
      </main>
    </div>
  );
}
